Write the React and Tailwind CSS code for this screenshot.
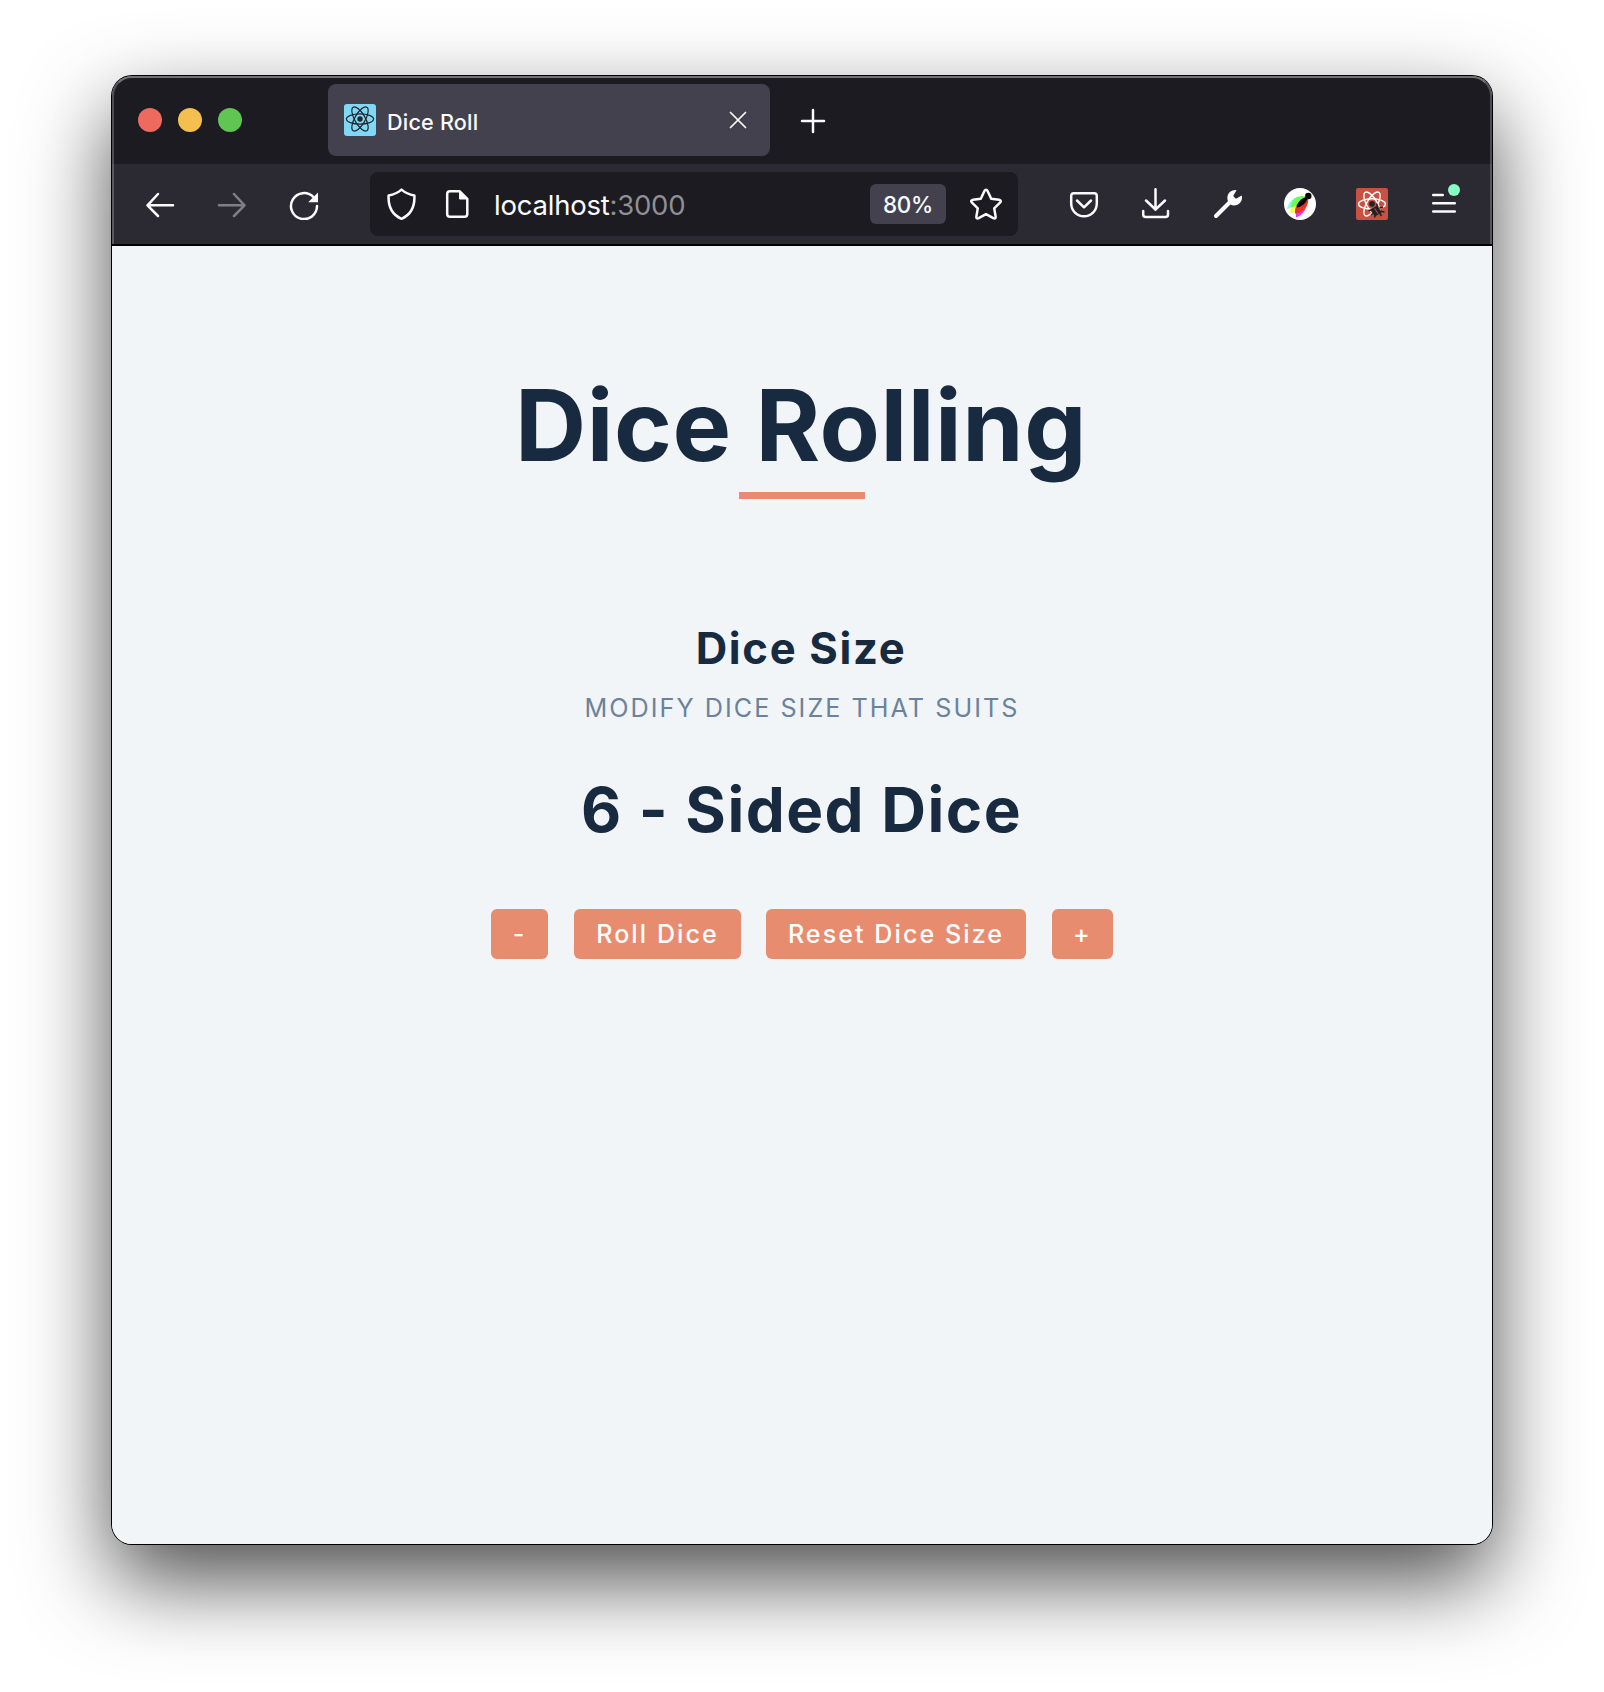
const ICON = { fill: 'none', stroke: '#fbfbfe', strokeWidth: 2.5, strokeLinecap: 'round', strokeLinejoin: 'round' };

function Atom({ className, stroke, width }) {
  return (
    <svg viewBox="0 0 32 32" className={className} fill="none" stroke={stroke} strokeWidth={width}>
      <ellipse cx="16" cy="16" rx="13.6" ry="5.2" />
      <ellipse cx="16" cy="16" rx="13.6" ry="5.2" transform="rotate(60 16 16)" />
      <ellipse cx="16" cy="16" rx="13.6" ry="5.2" transform="rotate(120 16 16)" />
      <circle cx="16" cy="16" r="2.7" fill={stroke} stroke="none" />
    </svg>
  );
}

function TabBar() {
  return (
    <div className="flex h-[88px] shrink-0 items-start bg-[#1c1b22]">
      <div className="mt-8 ml-[26px] flex gap-4">
        <span className="size-6 rounded-full bg-[#ee6a5f]" />
        <span className="size-6 rounded-full bg-[#f5bf4f]" />
        <span className="size-6 rounded-full bg-[#61c554]" />
      </div>
      <div className="mt-2 ml-[86px] flex h-[72px] w-[442px] items-center rounded-lg bg-[#42414d] pr-[23px] pl-4">
        <span className="size-8 rounded-[3px] bg-[#80d8f7]">
          <Atom className="size-8 -translate-y-px" stroke="#20232a" width={1.2} />
        </span>
        <span className="mt-[3px] ml-[11px] grow text-[21.6px] leading-8 font-medium tracking-[0.200px] text-[#fbfbfe]">Dice Roll</span>
        <svg className="size-[18px]" viewBox="0 0 18 18" {...ICON} strokeWidth={1.7}>
          <path d="M1.500 1.500l15 15M16.500 1.500l-15 15" />
        </svg>
      </div>
      <svg className="mt-8 ml-[30px] size-[26px]" viewBox="0 0 26 26" {...ICON}>
        <path d="M13 2v22M2 13h22" />
      </svg>
    </div>
  );
}

function Toolbar() {
  return (
    <div className="flex h-20 shrink-0 items-center bg-[#2b2a33]">
      <svg className="ml-8 size-8" viewBox="0 0 32 32" {...ICON}>
        <path d="M14 6L3.5 17.3 14 28M3.500 17.300H29" />
      </svg>
      <svg className="ml-10 size-8 opacity-40" viewBox="0 0 32 32" {...ICON}>
        <path d="M18 6l10.500 11.300L18 28M28.500 17.300H3" />
      </svg>
      <svg className="ml-10 size-8" viewBox="0 0 32 32" {...ICON}>
        <path d="M29 18A13 13 0 1 1 25.500 9.200" />
        <path d="M30 4.500v9.800h-9.800z" fill="#fbfbfe" stroke="none" />
      </svg>
      <div className="ml-[50px] flex h-16 w-[648px] items-center rounded-lg bg-[#1c1b22]">
        <svg className="ml-4 size-8" viewBox="0 0 32 32" {...ICON}>
          <path d="M15.500 1.600C12 4.600 7.500 6.500 2.600 7.500c-.5 11 4 19.500 12.900 23.300C24.400 27 28.900 18.500 28.400 7.500 23.500 6.500 19 4.600 15.500 1.600z" />
        </svg>
        <svg className="ml-6 size-8" viewBox="0 0 32 32" {...ICON}>
          <path d="M17.500 3.200H8q-2.800 0-2.800 2.800v20q0 2.800 2.800 2.800h14.500q2.800 0 2.800-2.800V10.800z" />
          <path d="M17.500 3v8h8z" fill="#fbfbfe" strokeWidth={1} />
        </svg>
        <span className="mt-px ml-5 grow text-[27.500px] leading-8 tracking-[-0.220px] text-[#fbfbfe]">
          localhost<span className="text-[#8f8f94]">:3000</span>
        </span>
        <span className="flex h-10 w-[76px] items-center justify-center rounded-md bg-[#42414d] pt-[2px] text-[22.400px] font-medium tracking-[-0.200px] text-[#fbfbfe]">80%</span>
        <svg className="mr-4 ml-6 size-8" viewBox="0 0 32 32" {...ICON}>
          <path d="M14.300 3.200q1.700-3 3.400 0l3.500 7.600 7.800 1q3 .6 1 2.900l-5.800 5.600 1.400 8.100q.3 2.900-2.300 1.700L16 26.200l-7.300 3.900q-2.600 1.200-2.300-1.700l1.400-8.100L2 14.700q-2-2.300 1-2.900l7.800-1z" />
        </svg>
      </div>
      <svg className="ml-[50px] size-8" viewBox="0 0 32 32" {...ICON}>
        <path d="M5.800 5.200h20.400q2.600 0 2.600 2.600V15.500a12.800 12.800 0 0 1-25.600 0V7.800q0-2.600 2.600-2.600z" />
        <path d="M9 12.500l7 6.800 7-6.800" />
      </svg>
      <svg className="ml-10 size-8" viewBox="0 0 32 32" {...ICON}>
        <path d="M15.500 1.200v20.500M6 12.500l9.500 9 9.500-9M3.200 23v3.500q0 2.500 2.500 2.500h19.800q2.500 0 2.500-2.500V23" />
      </svg>
      <svg className="ml-10 size-8" viewBox="0 0 32 32">
        <path d="M4 28L18 14" stroke="#fbfbfe" strokeWidth="4" strokeLinecap="round" />
        <path d="M24.500 2.200l-3.300 5.900 2.700 2.700 5.800-3.400c2 6.800-5.500 12.600-11.700 8.900-5.600-5.600-1.800-15.200 6.500-14.100z" fill="#fbfbfe" />
      </svg>
      <svg className="ml-10 size-8" viewBox="0 0 32 32">
        <circle cx="16" cy="16" r="16" fill="#fff" />
        <path d="M3 21C5 12 12 7 22 9 16 16 11 20 3 21z" fill="#7dfdfd" />
        <path d="M6 25C6 16 12 9 22 9c-2 9-8 16-16 16z" fill="#fdfd4f" />
        <path d="M6.500 19C8 10 14 6.500 23 8.500 20 15 15 19 6.500 19z" fill="#72fb4c" />
        <path d="M12 29.500c-1-9 2-16 11-20 1.500 9-3 17-11 20z" fill="#ea33f7" />
        <path d="M11 25.500C10.500 18 14 12 24 9c1.500 8-4 16-13 16.500z" fill="#eb3323" />
        <path d="M13 19.500c0-5 4-9.500 10.500-11 0 5-4.500 10-10.500 11z" fill="#000" />
        <circle cx="24.300" cy="8" r="3.200" fill="#000" />
      </svg>
      <svg className="ml-10 size-8" viewBox="0 0 32 32">
        <rect width="32" height="32" rx="2" fill="#c75242" />
        <g fill="none" stroke="#fff" strokeWidth="1.400">
          <ellipse cx="16" cy="16" rx="13.500" ry="5.200" />
          <ellipse cx="16" cy="16" rx="13.500" ry="5.200" transform="rotate(60 16 16)" />
          <ellipse cx="16" cy="16" rx="13.500" ry="5.200" transform="rotate(120 16 16)" />
        </g>
        <path d="M14 21l7.500-4.500L28 27l-9 4z" fill="#c75242" />
        <circle cx="16" cy="15.800" r="2.900" fill="#222" />
        <path d="M14.500 21.500l6.500-4 4.500 7-6.500 4z" fill="#222" />
        <path d="M18.800 20.500l3.200 5.200" stroke="#c75242" strokeWidth="1" />
        <path d="M12.500 22.500l3.500-.5M15 27l2.500-2M18.500 29.500l.8-3M20.500 15.500l1 3M27 19l-3.500 1M28.500 24l-4-.8M25.500 28l-1.800-3" stroke="#222" strokeWidth="1.600" />
      </svg>
      <svg className="ml-10 size-8 overflow-visible" viewBox="0 0 32 32" {...ICON}>
        <path d="M5.200 7h9.600M5.200 15.200h21.600M5.200 23.400h21.600" />
        <circle cx="26" cy="2" r="6" fill="#88fcc4" stroke="none" />
      </svg>
    </div>
  );
}

const BUTTON = 'h-[50px] rounded-[6px] bg-[#e88c70] text-[25px] leading-[50px] text-white';

function DicePage() {
  return (
    <main className="flex grow flex-col items-center border-t-2 border-black bg-[#f1f5f8] font-bold text-[#172a40]">
      <h1 className="mt-[120px] mr-[2px] text-[98.500px] leading-[120px] tracking-[0.550px]">Dice Rolling</h1>
      <div className="mt-[6px] h-[7px] w-[126px] bg-[#e88c70]" />
      <h4 className="mt-[124px] mr-[2px] text-[43.600px] leading-[52px] tracking-[1.650px]">Dice Size</h4>
      <p className="mt-[18px] text-[25.200px] leading-[30px] font-normal tracking-[2.030px] text-[#6b829c]">MODIFY DICE SIZE THAT SUITS</p>
      <h2 className="mt-[47px] mr-px text-[62px] leading-[80px] tracking-[1.450px]">6 - Sided Dice</h2>
      <div className="mt-[59px] flex font-medium tracking-[2.100px]">
        <button className={`${BUTTON} w-[57px]`}>-</button>
        <button className={`${BUTTON} ml-[26px] w-[167px]`}>Roll Dice</button>
        <button className={`${BUTTON} ml-[25px] w-[260px]`}>Reset Dice Size</button>
        <button className={`${BUTTON} ml-[26px] w-[61px]`}>+</button>
      </div>
    </main>
  );
}

export default function App() {
  return (
    <div className="h-[1692px] w-[1604px] overflow-hidden bg-white px-28 pt-[76px] font-['Inter',sans-serif]">
      <div className="relative h-[1468px] w-[1380px] rounded-[20px] shadow-[0_0_0_1px_#000,0_36px_86px_rgba(0,0,0,0.7)]">
        <div className="flex h-full flex-col overflow-hidden rounded-[20px]">
          <TabBar />
          <Toolbar />
          <DicePage />
        </div>
        <div className="pointer-events-none absolute inset-x-0 top-0 h-[168px] overflow-hidden rounded-t-[20px]">
          <div className="h-[200px] rounded-t-[20px] border-2 border-[#ffffff38] border-t-[#ffffff60]" />
        </div>
      </div>
    </div>
  );
}
